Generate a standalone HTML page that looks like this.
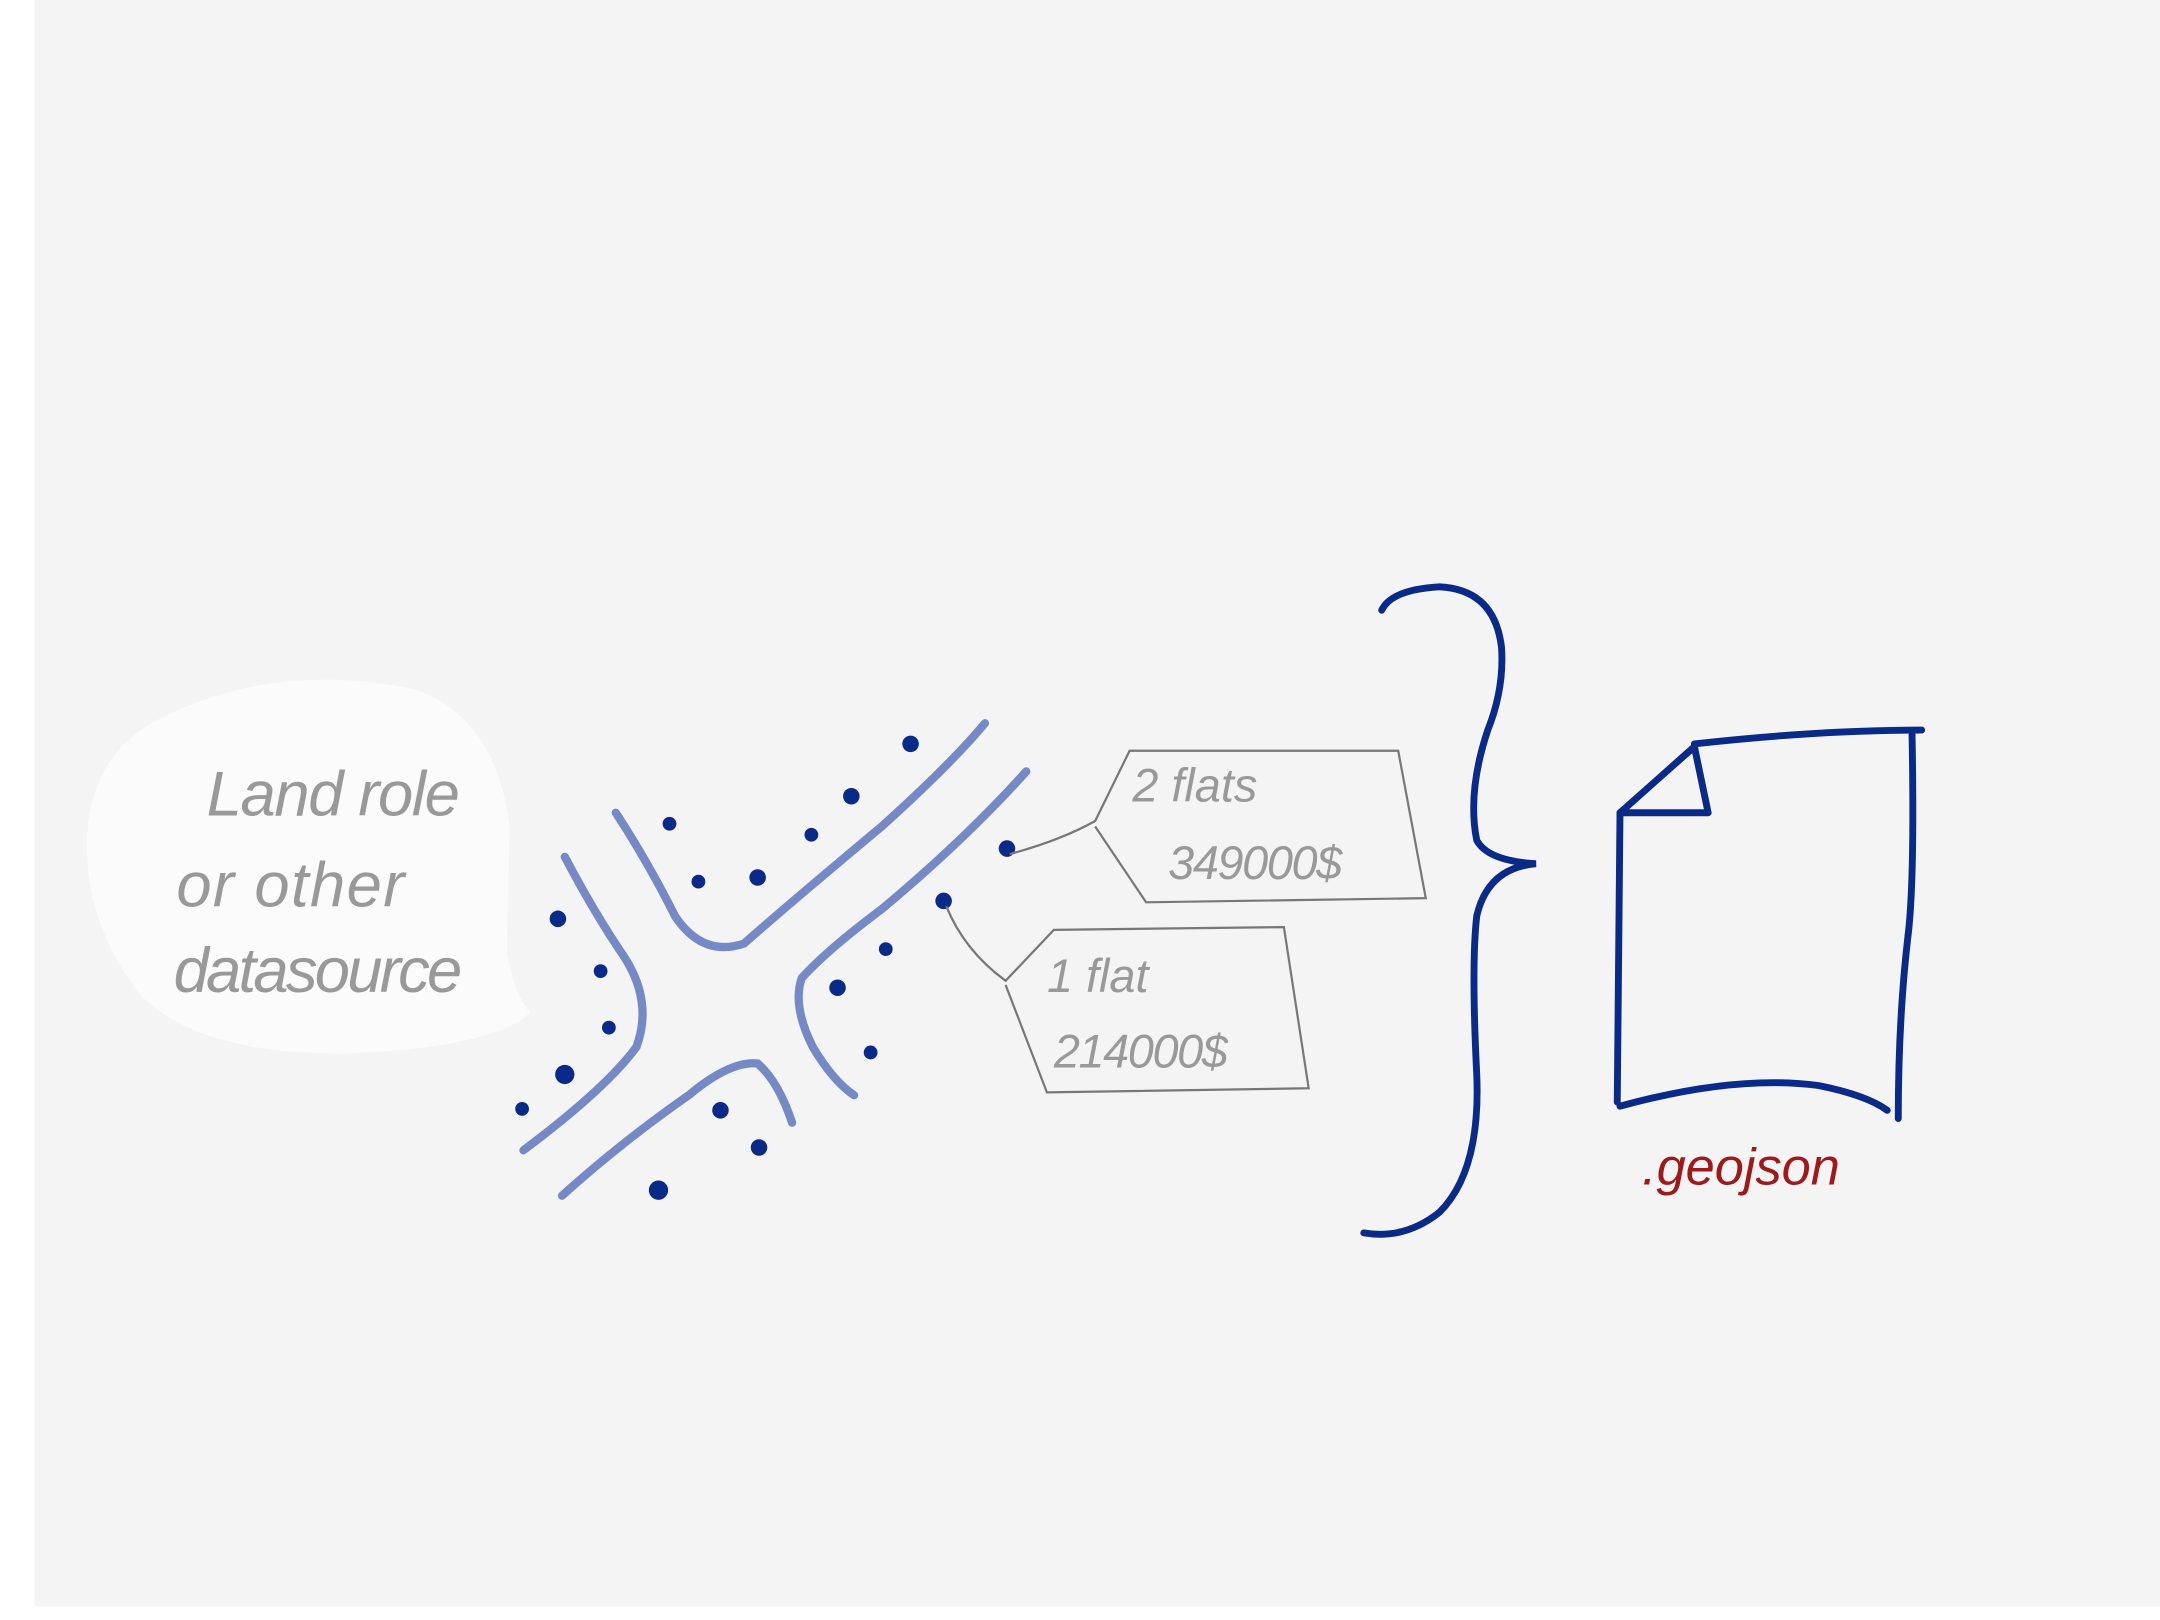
<!DOCTYPE html>
<html><head><meta charset="utf-8"><style>
html,body{margin:0;padding:0;background:#fff;width:2160px;height:1620px;overflow:hidden}
svg{display:block}
text{font-family:"Liberation Sans",sans-serif}
</style></head><body>
<svg width="2160" height="1620" viewBox="0 0 1568 1176" xmlns="http://www.w3.org/2000/svg">
<rect x="0" y="0" width="1568" height="1176" fill="#fff"/>
<rect x="25" y="0" width="1543" height="1166" fill="#f4f4f4"/>
<path d="M120 520 Q200 480 300 500 Q360 520 370 600 L368 690 Q372 720 385 735 Q360 760 250 765 Q140 765 100 720 Q55 660 65 590 Q75 540 120 520 Z" fill="#fbfbfb"/>
<g fill="#999" font-size="46" font-style="italic">
<text x="150" y="592" letter-spacing="-1">Land role</text>
<text x="128" y="658" letter-spacing="1">or other</text>
<text x="126" y="720" letter-spacing="-2">datasource</text>
</g>
<g fill="none" stroke="#7589c6" stroke-width="6" stroke-linecap="round">
<path d="M447 590 Q470 625 490 665 Q510 695 540 685 Q580 650 640 600 Q690 555 715 525"/>
<path d="M745 560 Q700 610 640 660 Q600 690 582 710 Q575 730 590 760 Q605 785 620 795"/>
<path d="M410 622 Q430 660 450 690 Q475 725 462 760 Q440 790 380 835"/>
<path d="M408 868 Q450 830 500 795 Q530 770 550 772 Q565 785 575 815"/>
</g>
<g fill="#0a2a8a">
<circle cx="486" cy="598" r="5"/><circle cx="507" cy="640" r="5"/><circle cx="550" cy="637" r="6"/>
<circle cx="589" cy="606" r="5"/><circle cx="618" cy="578" r="6"/><circle cx="661" cy="540" r="6"/>
<circle cx="405" cy="667" r="6"/><circle cx="436" cy="705" r="5"/><circle cx="442" cy="746" r="5"/>
<circle cx="410" cy="780" r="7"/><circle cx="379" cy="805" r="5"/>
<circle cx="523" cy="806" r="6"/><circle cx="551" cy="833" r="6"/><circle cx="478" cy="864" r="7"/>
<circle cx="608" cy="717" r="6"/><circle cx="643" cy="689" r="5"/><circle cx="632" cy="764" r="5"/>
<circle cx="731" cy="616" r="6"/><circle cx="685" cy="654" r="6"/>
</g>
<g fill="none" stroke="#777" stroke-width="1.6">
<path d="M733 620 Q770 610 795 596 L820 545 L1015 545 L1035 652 L832 655 L795 600"/>
<path d="M687 658 Q700 690 730 712 L765 675 L932 673 L950 790 L760 793 L730 715"/>
</g>
<g fill="#999" font-size="34" font-style="italic">
<text x="822" y="582">2 flats</text>
<text x="848" y="638" letter-spacing="-1">349000$</text>
<text x="760" y="720">1 flat</text>
<text x="765" y="775" letter-spacing="-1">214000$</text>
</g>
<path d="M1003 443 Q1010 428 1045 426 Q1085 428 1090 470 Q1092 500 1080 530 Q1065 575 1072 610 Q1080 625 1115 627 Q1080 630 1072 665 Q1068 700 1072 780 Q1075 850 1045 880 Q1020 900 990 895" fill="none" stroke="#0a2a8a" stroke-width="5" stroke-linecap="round"/>
<g fill="none" stroke="#0a2a8a" stroke-width="5" stroke-linecap="round" stroke-linejoin="round">
<path d="M1230 540 Q1320 530 1395 530"/>
<path d="M1388 533 Q1390 640 1385 680 Q1378 740 1378 812"/>
<path d="M1176 803 Q1260 780 1320 788 Q1355 795 1370 806"/>
<path d="M1176 590 L1174 800"/>
<path d="M1176 590 L1230 542 L1240 590 Z"/>
</g>
<text x="1192" y="860" fill="#a01818" font-size="38" font-style="italic">.geojson</text>
</svg>
</body></html>
